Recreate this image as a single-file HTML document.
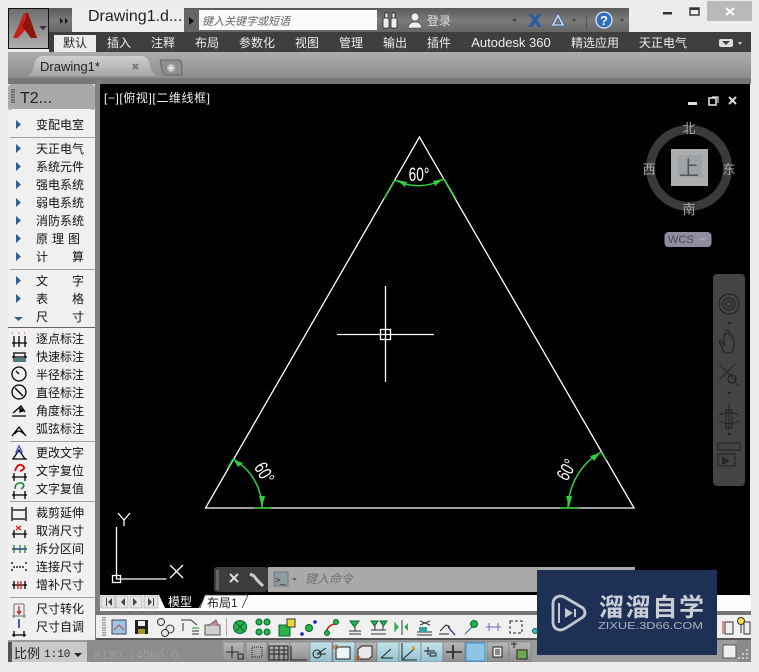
<!DOCTYPE html>
<html><head><meta charset="utf-8"><style>
html,body{margin:0;padding:0;width:759px;height:672px;overflow:hidden;background:#ececec}
svg{display:block}
text{font-family:"Liberation Sans","Noto Sans CJK SC",sans-serif}
.m text,text.m{font-size:12px;fill:#111}
.r text{font-size:12px;fill:#eee}
.a{fill:#2f5f94}
.k{fill:none;stroke:#000;stroke-width:1.3}
</style></head><body>
<svg width="759" height="672" viewBox="0 0 759 672" xmlns="http://www.w3.org/2000/svg">
<defs>
<linearGradient id="tb" x1="0" y1="0" x2="0" y2="1"><stop offset="0" stop-color="#5a5a5a"/><stop offset=".5" stop-color="#7a7a7a"/><stop offset="1" stop-color="#666"/></linearGradient>
<linearGradient id="dt" x1="0" y1="0" x2="0" y2="1"><stop offset="0" stop-color="#adadad"/><stop offset="1" stop-color="#8a8a8a"/></linearGradient>
<linearGradient id="ab" x1="0" y1="0" x2="0" y2="1"><stop offset="0" stop-color="#6e6e6e"/><stop offset="1" stop-color="#b0b0b0"/></linearGradient>
<linearGradient id="bl" x1="0" y1="0" x2="0" y2="1"><stop offset="0" stop-color="#c4e3ea"/><stop offset="1" stop-color="#8fc0cf"/></linearGradient>
<linearGradient id="gr" x1="0" y1="0" x2="0" y2="1"><stop offset="0" stop-color="#b8b8b8"/><stop offset="1" stop-color="#8c8c8c"/></linearGradient>
<linearGradient id="tab" x1="0" y1="0" x2="0" y2="1"><stop offset="0" stop-color="#cfcfcf"/><stop offset="1" stop-color="#a6a6a6"/></linearGradient>
</defs>
<rect width="759" height="672" fill="#ececec"/>

<!-- title bar -->
<rect x="8" y="8" width="621" height="24" fill="url(#tb)"/>
<rect x="72" y="8" width="112" height="24" fill="#eeeeee"/>
<rect x="184" y="9" width="15" height="23" fill="#666"/>
<path d="M189 17l5 4-5 4z" fill="#111"/>
<rect x="199" y="10" width="178" height="20" fill="#fafafa"/>
<text x="88" y="21" font-size="16" fill="#222">Drawing1.d...</text>
<text x="202" y="25" font-size="11" font-style="italic" fill="#666">键入关键字或短语</text>
<path d="M60 18l3 3-3 3zM65 18l3 3-3 3z" fill="#111"/>
<!-- binoculars / user -->
<g fill="#eee" stroke="#222" stroke-width=".8"><rect x="383" y="18" width="6" height="10" rx="1"/><rect x="391" y="18" width="6" height="10" rx="1"/><rect x="385" y="13" width="3" height="5"/><rect x="392" y="13" width="3" height="5"/></g>
<circle cx="415" cy="17" r="4" fill="#eee" stroke="#333" stroke-width=".6"/><path d="M408 28q1-6 7-6t7 6z" fill="#eee" stroke="#333" stroke-width=".6"/>
<text x="427" y="25" font-size="12" fill="#ddd">登录</text>
<path d="M512 19h5l-2.500 3z" fill="#444"/>
<path d="M528 14h4l3 4 3-4h4l-5 6 5 7h-4l-3-4-3 4h-4l5-7z" fill="#2d5aa8"/>
<path d="M558 13l7 13h-14zM558 18l-3 6h6z" fill="#bcd0ea" fill-rule="evenodd" stroke="#34508a" stroke-width=".6"/>
<path d="M572 19h4l-2 3z" fill="#444"/>
<rect x="586" y="15" width="1" height="15" fill="#555"/>
<circle cx="604" cy="20" r="8" fill="#2f6fc0" stroke="#dfe9f5" stroke-width="1.300"/><text x="604" y="25" font-size="13" font-weight="bold" fill="#fff" text-anchor="middle">?</text>
<path d="M620 19h4l-2 3z" fill="#444"/>
<!-- window buttons -->
<rect x="663" y="12" width="9" height="2.500" fill="#333"/>
<rect x="690" y="8" width="9" height="7" fill="none" stroke="#333" stroke-width="1.400"/><rect x="690" y="8" width="9" height="2" fill="#333"/>
<rect x="707" y="1" width="45" height="20" fill="#b9b9b9"/>
<path d="M726 8l8 7M734 8l-8 7" stroke="#fff" stroke-width="2"/>

<!-- ribbon tabs -->
<rect x="49" y="32" width="702" height="20" fill="#3f3f3f"/>
<rect x="54" y="35" width="42" height="17" fill="#ededed"/>
<g class="r" text-anchor="middle">
<text x="75" y="47" style="fill:#222">默认</text><text x="119" y="47">插入</text><text x="163" y="47">注释</text><text x="207" y="47">布局</text><text x="257" y="47">参数化</text><text x="307" y="47">视图</text><text x="351" y="47">管理</text><text x="395" y="47">输出</text><text x="439" y="47">插件</text><text x="511" y="47" style="font-size:13px">Autodesk 360</text><text x="595" y="47">精选应用</text><text x="663" y="47">天正电气</text>
</g>
<rect x="719" y="39" width="14" height="8" rx="2" fill="#ddd"/><path d="M722 41h8l-4 4z" fill="#3f3f3f"/><path d="M738 42h4l-2 3z" fill="#ccc"/>

<!-- app button -->
<rect x="8.500" y="8.500" width="40" height="40" fill="url(#ab)" stroke="#111"/>
<path d="M13 38L24 13h4L37 38H31L25 30 18 38z" fill="#c8201a"/>
<path d="M26 13h2L37 38H31L25 30 22 26 26 19z" fill="#8e140e"/>
<path d="M39 26h8l-4 4z" fill="#333"/>

<!-- doc tab bar -->
<rect x="8" y="52" width="743" height="28" fill="url(#dt)"/>
<rect x="8" y="78" width="743" height="6" fill="#777"/>
<path d="M26 76q6-1 8-10 2-10 8-10h100q6 0 8 10 2 9 9 10z" fill="url(#tab)"/>
<text x="40" y="71" font-size="13" fill="#222">Drawing1*</text>
<path d="M133 64l5 5M138 64l-5 5" stroke="#777" stroke-width="2"/>
<path d="M160 60h18q4 0 4 6v9h-15q-4 0-5-5z" fill="#8f8f8f" stroke="#666"/>
<circle cx="171" cy="68" r="4" fill="#b8b8b8"/><path d="M171 65v6M168 68h6" stroke="#eee" stroke-width="1.200"/>

<!-- left panel -->
<rect x="95" y="80" width="6" height="562" fill="#808080"/>
<rect x="8" y="84" width="87" height="27" fill="#a9a9a9" rx="4"/>
<path d="M12 89v14M14 89v14" stroke="#222" stroke-width="1" stroke-dasharray="1.500 1"/>
<text x="20" y="103" font-size="16" fill="#222">T2...</text>
<rect x="8" y="109" width="87" height="530" fill="#f0f0f0" rx="5"/>
<g fill="#a0a0a0"><rect x="10" y="137" width="85" height="1"/><rect x="10" y="269" width="85" height="1"/><rect x="8" y="327" width="87" height="1" fill="#666"/><rect x="10" y="441" width="85" height="1"/><rect x="10" y="501" width="85" height="1"/><rect x="10" y="597" width="85" height="1"/></g>
<g class="a">
<path d="M16 120l5 4.500-5 4.500zM16 144l5 4.500-5 4.500zM16 162l5 4.500-5 4.500zM16 180l5 4.500-5 4.500zM16 198l5 4.500-5 4.500zM16 216l5 4.500-5 4.500zM16 234l5 4.500-5 4.500zM16 252l5 4.500-5 4.500zM16 276l5 4.500-5 4.500zM16 294l5 4.500-5 4.500zM14 317h9l-4.500 4z"/>
</g>
<g class="m">
<text x="36" y="129">变配电室</text><text x="36" y="153">天正电气</text><text x="36" y="171">系统元件</text><text x="36" y="189">强电系统</text><text x="36" y="207">弱电系统</text><text x="36" y="225">消防系统</text>
<text x="36" y="243">原</text><text x="52" y="243">理</text><text x="68" y="243">图</text>
<text x="36" y="261">计</text><text x="72" y="261">算</text>
<text x="36" y="285">文</text><text x="72" y="285">字</text><text x="36" y="303">表</text><text x="72" y="303">格</text><text x="36" y="321">尺</text><text x="72" y="321">寸</text>
<text x="36" y="343">逐点标注</text><text x="36" y="361">快速标注</text><text x="36" y="379">半径标注</text><text x="36" y="397">直径标注</text><text x="36" y="415">角度标注</text><text x="36" y="433">弧弦标注</text>
<text x="36" y="457">更改文字</text><text x="36" y="475">文字复位</text><text x="36" y="493">文字复值</text>
<text x="36" y="517">裁剪延伸</text><text x="36" y="535">取消尺寸</text><text x="36" y="553">拆分区间</text><text x="36" y="571">连接尺寸</text><text x="36" y="589">增补尺寸</text>
<text x="36" y="613">尺寸转化</text><text x="36" y="631">尺寸自调</text>
</g>
<!-- left icons -->
<g class="k">
<path d="M12 343h15M14 336v11M19 336v11M25 336v11"/>
<path d="M12 357h15M14 352v8M25 352v8M15 353h9"/><rect x="13" y="358" width="13" height="4" fill="#4d7d80" stroke="none"/>
<circle cx="19" cy="374" r="7"/><path d="M19 374l-3-3"/>
<circle cx="19" cy="392" r="7"/><path d="M15 388l8 8"/>
<path d="M12 416h14M13 413l8-7 4 6"/><path d="M20 408l3 3-3 1z" fill="#111"/>
<path d="M12 436l7-9 7 9M15 434q3-6 9 0"/>
<path d="M12 459h15M13 459l6-9 6 9"/><path d="M19 446l3 6h-6z" stroke="#3b52c0"/>
<path d="M12 477h15M14 473v8M25 473v8"/><path d="M15 471q3-9 8-5 3 3-3 5" stroke="#d01818" stroke-width="2"/>
<path d="M12 495h15M14 491v8M25 491v8"/><path d="M15 489q0-7 7-6 4 3-1 6" stroke="#1a8a30" stroke-width="1.600"/>
<path d="M12 507v14M26 507v14M13 510h12M13 519h12"/>
<path d="M12 534h15M14 530v8M25 530v8"/><path d="M16 526l5 4M21 526l-5 4" stroke="#c02020"/>
<path d="M12 549h15" stroke="#118"/><path d="M14 545v8M20 545v8M25 545v8" stroke="#1a8a30"/>
<path d="M12 562v3M12 569v3M26 562v3M26 569v3M13 567h12" stroke-dasharray="2 1"/>
<path d="M12 585h15M14 581v8M25 581v8"/><path d="M18 581v8M21 581v8" stroke="#d01818"/>
<path d="M12 616h14M14 604v14M24 604v14M14 604h10" stroke="#888"/><path d="M19 606v8M17 611l2 3 2-3" stroke="#c02020"/>
<path d="M12 635h14M14 631v6M24 631v6"/><path d="M19 619v9" stroke="#1030a0" stroke-width="1.500"/>
</g>
<path d="M12 333h2M18 333h2M24 333h2" stroke="#d04040" stroke-dasharray="1 1"/>

<!-- canvas -->
<rect x="100" y="84" width="650" height="511" fill="#000"/>
<text x="104" y="102" font-size="12" fill="#f0f0f0" textLength="106" lengthAdjust="spacing">[−][俯视][二维线框]</text>
<rect x="688" y="102" width="9" height="3" fill="#ddd"/>
<rect x="709" y="98" width="7" height="7" fill="none" stroke="#ddd" stroke-width="1.600"/><path d="M712 97h6v6" fill="none" stroke="#ddd" stroke-width="1.200"/>
<path d="M729 97l7 7M736 97l-7 7" stroke="#ddd" stroke-width="2"/>

<!-- drawing -->
<g fill="none" stroke="#fff" stroke-width="1.300">
<path d="M419.500 137L205.500 508H634L419.500 137z"/>
<path d="M385.500 286v96M337 334.500h97"/><rect x="380.500" y="329.500" width="10" height="10"/>
<path d="M116.500 527v52h50M170 565l13 13M183 565l-13 13M118 513l6 7 6-7M124 520v6"/><rect x="112.500" y="575.500" width="8" height="7"/>
</g>
<g fill="none" stroke="#2fd03f" stroke-width="1.500">
<path d="M395 180Q419 192 444 179"/><path d="M395 180L384 199M444 179L456 199"/>
<path d="M233 459A57 57 0 0 1 262 508"/><path d="M233 459L228 468M253 508H271"/>
<path d="M601 452A66 66 0 0 0 568 508"/><path d="M601 452L606 460M560 508H580"/>
</g>
<g fill="#2fd03f">
<path d="M397 180l10 2-2 5zM443 179l-10 2 2 5z"/>
<path d="M234 460l9 3-5 4zM262 507l-3-11h6z"/>
<path d="M600 453l-10 3 4 5zM569 507l-3-11h6z"/>
</g>
<g fill="#fff" font-size="19" text-anchor="middle">
<text transform="translate(419 181) scale(.72 1)">60°</text>
<text transform="translate(264 473) rotate(60) scale(.72 1)" y="6">60°</text>
<text transform="translate(567 470) rotate(-60) scale(.72 1)" y="6">60°</text>
</g>

<!-- viewcube -->
<circle cx="689" cy="168" r="38.500" fill="none" stroke="#3a3a3a" stroke-width="9"/>
<rect x="671" y="149" width="37" height="37" fill="#adadad"/>
<rect x="678" y="155" width="24" height="22" fill="#9ea3a8"/>
<text x="689" y="175" font-size="20" fill="#555" text-anchor="middle">上</text>
<g font-size="13" fill="#a8a8a8" text-anchor="middle"><text x="689" y="133">北</text><text x="689" y="214">南</text><text x="649" y="174">西</text><text x="729" y="174">东</text></g>
<rect x="664.500" y="232" width="47" height="15" rx="4" fill="#8f8d9f"/>
<text x="668" y="243" font-size="11" fill="#4a4a55">WCS</text><path d="M698 238h8l-4 3z" fill="#a8a6b6"/>

<!-- nav bar -->
<rect x="713" y="274" width="32" height="212" rx="4" fill="#444"/>
<g fill="none" stroke="#262626" stroke-width="1.200">
<circle cx="729" cy="304" r="10"/><circle cx="729" cy="304" r="6"/><circle cx="729" cy="304" r="3"/>
<path d="M722 348l-3-7q1-2 3 1l2 3v-10q2-2 2 0v-4q2-2 3 0v4q2-2 3 0v3q2-1 2 1v6q0 7-5 8h-4z"/>
<path d="M719 364l16 16M735 364l-16 16"/><circle cx="732" cy="379" r="4"/><path d="M735 382l4 4"/>
<path d="M729 403v27M726 410h6v18h-6zM719 415q10-5 20 0M719 421q10 5 20 0"/>
<rect x="718" y="443" width="22" height="7"/><rect x="718" y="454" width="17" height="12"/>
</g>
<path d="M722 456l8 5-8 4z" fill="#262626"/>
<rect x="728" y="322" width="3" height="2" fill="#222"/><rect x="728" y="392" width="3" height="2" fill="#222"/><rect x="728" y="433" width="3" height="2" fill="#222"/>

<!-- command bar -->
<rect x="214" y="567" width="54" height="25" rx="3" fill="#3d3d3d"/>
<rect x="268" y="567" width="367" height="25" fill="#a9a9a9"/>
<rect x="216" y="570" width="3" height="20" fill="#666"/>
<path d="M230 574l8 8M238 574l-8 8" stroke="#ddd" stroke-width="2"/>
<path d="M250 574l4 2 3 4 6 6" stroke="#ccc" stroke-width="3" fill="none"/>
<rect x="274" y="572" width="14" height="14" fill="#8f9ba0" stroke="#777"/><text x="275" y="583" font-size="9" fill="#222">&gt;_</text>
<path d="M292 578h5l-2.500 3z" fill="#666"/>
<text x="305" y="583" font-size="12" font-style="italic" fill="#707070">键入命令</text>

<!-- layout tabs row -->
<rect x="100" y="595" width="651" height="16" fill="#fdfdfd"/>
<rect x="96" y="611" width="655" height="4" fill="#777"/>
<g fill="#e4e4e4" stroke="#999" stroke-width=".6"><rect x="101" y="596" width="14" height="12"/><rect x="116" y="596" width="12" height="12"/><rect x="130" y="596" width="12" height="12"/><rect x="144" y="596" width="14" height="12"/></g>
<g fill="#444"><path d="M106 598v8h1v-8zM112 598l-4 4 4 4zM125 598l-4 4 4 4zM133 598l4 4-4 4zM148 598l4 4-4 4zM153 598v8h1v-8z"/></g>
<path d="M159 595h46l-6 13h-34z" fill="#000"/>
<text x="168" y="606" font-size="12" fill="#fff">模型</text>
<path d="M200 608l5-13h43l-6 13" fill="#fff" stroke="#333" stroke-width=".8"/>
<text x="207" y="607" font-size="12" fill="#222">布局1</text>

<!-- toolbar -->
<rect x="96" y="615" width="655" height="23" fill="#f0f0f0"/>
<path d="M103 617v19M105 617v19" stroke="#555" stroke-dasharray="1.500 1"/>
<g stroke-width="1">
<rect x="112" y="620" width="14" height="14" fill="#9fc5e8" stroke="#446"/><path d="M114 630l5-5 5 5" stroke="#b0503a" fill="none"/>
<rect x="135" y="620" width="13" height="14" fill="#222"/><rect x="138" y="621" width="7" height="5" fill="#eee"/><rect x="138" y="629" width="7" height="5" fill="#a89030"/>
<circle cx="161" cy="622" r="3.500" fill="#e8e8e8" stroke="#333"/><circle cx="170" cy="629" r="4" fill="#e8e8e8" stroke="#333"/><circle cx="165" cy="633" r="3.500" fill="#e8e8e8" stroke="#333"/>
<path d="M181 620h10l6 5M183 623v8M192 628h7M192 631h7M192 634h7" fill="none" stroke="#333"/><path d="M192 628h7" stroke="#1a8a30"/>
<rect x="205" y="625" width="15" height="10" fill="#cfcfcf" stroke="#555"/><path d="M208 626l8-6 2 5" fill="#c88" stroke="#666"/>
<rect x="226" y="618" width="1" height="18" fill="#aaa"/>
<circle cx="240" cy="627" r="6.500" fill="#2bb24b" stroke="#063"/><path d="M236 623l8 8M244 623l-8 8" stroke="#063"/>
<g fill="#2bb24b" stroke="#063"><circle cx="259" cy="622" r="3"/><circle cx="267" cy="622" r="3"/><circle cx="259" cy="632" r="3"/><circle cx="267" cy="632" r="3"/></g>
<rect x="279" y="625" width="11" height="11" fill="#2bb24b" stroke="#063"/><rect x="287" y="619" width="8" height="8" fill="#e8d83a" stroke="#333"/>
<circle cx="309" cy="628" r="3.500" fill="#2bb24b" stroke="#063"/><circle cx="302" cy="634" r="1.800" fill="#1020c0"/><circle cx="315" cy="622" r="1.800" fill="#1020c0"/>
<path d="M326 634q1-9 9-10" stroke="#d01818" fill="none" stroke-width="1.600"/><circle cx="327" cy="633" r="2.500" fill="#2bb24b" stroke="#063"/><circle cx="336" cy="622" r="2.500" fill="#2bb24b" stroke="#063"/>
<path d="M350 621h9l-4.500 6z" fill="#2bb24b" stroke="#063"/><path d="M355 627v4M349 631h12M349 634h12" stroke="#333" fill="none"/>
<path d="M371 621h7l-3.500 5zM380 621h7l-3.500 5z" fill="#2bb24b" stroke="#063"/><path d="M371 630h15M371 634h15M375 626v4M383 626v4" stroke="#333" fill="none"/>
<path d="M395 622v10" stroke="#1a8a30"/><path d="M402 620v15" stroke="#333"/><path d="M404 627l4-4v8zM399 627l-4-4v8z" fill="#2bb24b"/>
<path d="M420 621l10 4M420 625l10-4M417 632h15M417 635h15" stroke="#333" fill="none"/><rect x="419" y="627" width="8" height="5" fill="#3aa0a0"/>
<path d="M440 631l6-6 4 2M439 634h10M448 627l7 8" stroke="#222" fill="none"/><path d="M449 628l6 7" stroke="#1030a0"/>
<path d="M465 634l7-7" stroke="#2060b0"/><circle cx="474" cy="624" r="3.500" fill="#2bb24b" stroke="#063"/>
<path d="M486 627h15M489 623v8M498 623v8" stroke="#8060c0" fill="none"/>
<rect x="510" y="621" width="12" height="12" fill="none" stroke="#222" stroke-dasharray="3 2"/>
<circle cx="535" cy="631" r="2.500" fill="#3ac0c0" stroke="#063"/>
<path d="M723 621v13" stroke="#c03030"/><rect x="725" y="622" width="8" height="12" fill="#eee" stroke="#333"/>
<circle cx="741" cy="621" r="3.500" fill="#f0e050" stroke="#333"/><path d="M741 625v8" stroke="#333"/><rect x="744" y="622" width="6" height="12" fill="#eee" stroke="#333"/>
</g>
<rect x="96" y="638" width="655" height="2" fill="#555"/>

<!-- status bar -->
<rect x="8" y="640" width="743" height="22" fill="#9a9a9a"/>
<rect x="8" y="642" width="4" height="20" fill="#555"/>
<rect x="12" y="642" width="75" height="20" fill="#c9c9c9"/>
<text x="14" y="658" font-size="13" fill="#222">比例</text>
<text x="44" y="657" font-size="11" fill="#222" style="font-family:'Liberation Mono',monospace">1:10</text>
<path d="M74 653h8l-4 4z" fill="#222"/>
<rect x="87" y="640" width="135" height="22" fill="#8c8c8c"/>
<text x="94" y="659" font-size="12" fill="#9d9d9d" textLength="84">8130, 14060, 0</text>
<g stroke="#777" stroke-width=".6">
<rect x="223" y="642" width="21" height="20" fill="url(#gr)"/>
<rect x="246" y="642" width="21" height="20" fill="url(#gr)"/>
<rect x="268" y="642" width="22" height="20" fill="url(#gr)"/>
<rect x="290" y="642" width="22" height="20" fill="url(#gr)"/>
<rect x="310" y="642" width="22" height="20" fill="url(#bl)"/>
<rect x="333" y="642" width="22" height="20" fill="url(#bl)"/>
<rect x="355" y="642" width="22" height="20" fill="url(#gr)"/>
<rect x="377" y="642" width="22" height="20" fill="url(#bl)"/>
<rect x="399" y="642" width="22" height="20" fill="url(#bl)"/>
<rect x="421" y="642" width="22" height="20" fill="url(#bl)"/>
<rect x="443" y="642" width="22" height="20" fill="url(#gr)"/>
<rect x="465" y="642" width="22" height="20" fill="url(#bl)"/>
<rect x="487" y="642" width="22" height="20" fill="url(#gr)"/>
<rect x="509" y="642" width="22" height="20" fill="url(#gr)"/>
</g>
<g fill="none" stroke="#222" stroke-width="1">
<path d="M232 646v12M226 652h13"/><rect x="238" y="654" width="5" height="5"/>
<rect x="252" y="647" width="10" height="10" stroke-dasharray="1 1"/>
<path d="M269 646h19v14h-19zM269 650h19M269 654h19M274 646v14M279 646v14M284 646v14"/>
<path d="M291 646v14h16"/>
<circle cx="317" cy="654" r="4"/><path d="M317 654l9-6M317 654h9"/>
<rect x="336" y="647" width="14" height="12" fill="#eaf5f8"/><circle cx="336" cy="647" r="2" stroke="#c06030"/>
<path d="M358 649l4-3h10v10l-3 3h-11z" fill="#e8e8e8"/><circle cx="358" cy="658" r="2" stroke="#c06030"/>
<path d="M381 658l10-9M381 658h12"/>
<path d="M402 643v17h15M403 659l11-10"/><path d="M413 645l3 4-4 1z" fill="#e0a030" stroke="none"/>
<path d="M424 651h11M428 647v8"/><rect x="430" y="653" width="6" height="3"/>
<path d="M446 652h16M453 645v14" stroke-width="1.600"/>
</g>
<rect x="466" y="643" width="19" height="18" fill="#8ec4e4" stroke="#3a8ac0"/>
<rect x="493" y="647" width="9" height="10" fill="#eee" stroke="#222"/><path d="M495 650h5M495 652h5M495 654h5" stroke="#222"/>
<path d="M511 644h6M514 642v6" stroke="#222"/><rect x="517" y="650" width="10" height="9" fill="#6faa50" stroke="#222"/>
<rect x="723" y="645" width="13" height="13" fill="#eee" stroke="#555"/>
<rect x="737" y="640" width="14" height="22" fill="#8a8a8a"/>
<g fill="#ddd"><circle cx="747" cy="650" r="1"/><circle cx="743" cy="654" r="1"/><circle cx="747" cy="654" r="1"/><circle cx="739" cy="658" r="1"/><circle cx="743" cy="658" r="1"/><circle cx="747" cy="658" r="1"/></g>
<rect x="0" y="662" width="759" height="10" fill="#ececec"/>

<!-- watermark -->
<rect x="537" y="570" width="180" height="85" fill="#1f3056"/>
<path d="M553 604q0-7 7-8 3 0 6 2L583 608q4 5 0 9L566 628q-3 2-6 2-7-1-7-8z" fill="none" stroke="#c4c9d1" stroke-width="2.800"/>
<path d="M559 603v20" stroke="#c4c9d1" stroke-width="2"/>
<path d="M565 608l8 5-8 5z" fill="#c4c9d1"/><rect x="574" y="609" width="2" height="8" fill="#c4c9d1"/>
<text x="599" y="616" font-size="25" font-weight="bold" fill="#c9ced6" textLength="105" lengthAdjust="spacing">溜溜自学</text>
<text x="598" y="629" font-size="10" fill="#aab2c0" textLength="105" lengthAdjust="spacingAndGlyphs">ZIXUE.3D66.COM</text>
</svg>
</body></html>
